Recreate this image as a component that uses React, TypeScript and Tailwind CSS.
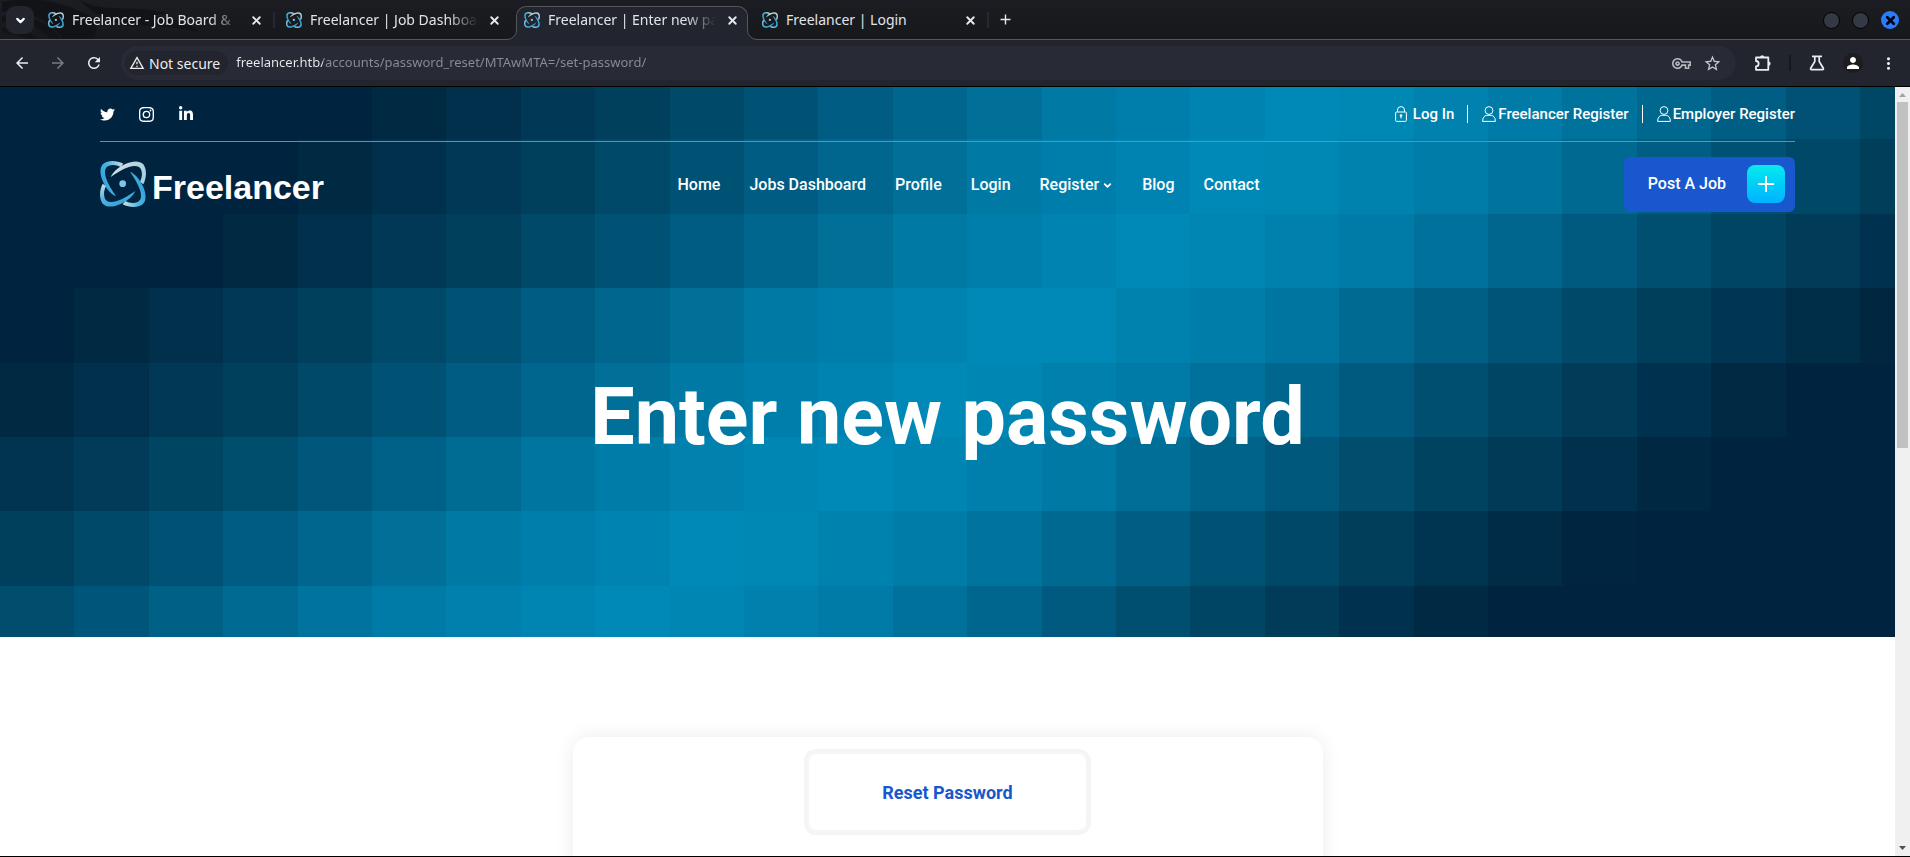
import React from "react";
import {
  MdArrowBack,
  MdArrowForward,
  MdRefresh,
  MdOutlineWarningAmber,
  MdOutlineVpnKey,
  MdStarBorder,
  MdPerson,
  MdMoreVert,
  MdAdd,
} from "react-icons/md";
import { FaTwitter, FaLinkedinIn } from "react-icons/fa";
import { BsInstagram } from "react-icons/bs";
import { ChevronDown, X } from "lucide-react";

const CELL = 74.4;
const COLUMNS = 26;

const PALETTE = [
  [0, 35, 63],
  [0, 41, 66],
  [0, 48, 76],
  [0, 56, 85],
  [0, 64, 92],
  [0, 73, 104],
  [0, 82, 116],
  [0, 92, 130],
  [0, 102, 141],
  [0, 112, 153],
  [0, 121, 165],
  [0, 126, 171],
  [0, 131, 176],
  [0, 137, 182],
];

// Per row: shift of the rising slope, and the column where the falling slope ends.
const ROWS = [
  { rise: -4, end: 29.2 },
  { rise: -3, end: 28.3 },
  { rise: -2, end: 27 },
  { rise: 0, end: 25.4 },
  { rise: 1, end: 24 },
  { rise: 2.5, end: 22.8 },
  { rise: 4, end: 21.3 },
  { rise: 5.4, end: 20 },
];

function shade(level: number): string {
  const top = PALETTE.length - 1;
  const l = Math.max(0, Math.min(top, level));
  const i = Math.floor(l);
  const j = Math.min(top, i + 1);
  const mix = PALETTE[i].map((c, k) => Math.round(c + (PALETTE[j][k] - c) * (l - i)));
  return `rgb(${mix.join(",")})`;
}

function Mosaic() {
  return (
    <svg
      aria-hidden="true"
      className="absolute inset-0 h-full w-full"
      viewBox="0 22 1895 550"
      preserveAspectRatio="none"
      shapeRendering="crispEdges"
    >
      {ROWS.map((row, r) =>
        Array.from({ length: COLUMNS }, (_, c) => (
          <rect
            key={`${r}-${c}`}
            x={c * CELL}
            y={r * CELL}
            width={CELL + 1}
            height={CELL + 1}
            fill={shade(Math.min(c + row.rise, (row.end - c) * 1.14))}
          />
        ))
      )}
    </svg>
  );
}

const LOBE =
  "M70 8C50-2 25-3 10 8C-3 20 0 42 9 62C18 82 31 98 48 106C36 88 24 70 18 51C13 35 13 21 25 15C38 10 50 12 62 18Z";

function AtomLogo({ id, className }: { id: string; className: string }) {
  return (
    <svg aria-hidden="true" viewBox="0 0 138 138" className={className}>
      <defs>
        <linearGradient id={`${id}-a`} x1="0" y1="0.6" x2="1" y2="0">
          <stop offset="0" stopColor="#2f9fd8" />
          <stop offset="0.45" stopColor="#4cb4e2" />
          <stop offset="1" stopColor="#d5e6e6" />
        </linearGradient>
        <linearGradient id={`${id}-b`} x1="0" y1="1" x2="0.6" y2="0">
          <stop offset="0" stopColor="#e9eeec" />
          <stop offset="0.5" stopColor="#b9d6de" />
          <stop offset="1" stopColor="#a5d3e4" />
        </linearGradient>
      </defs>
      <path d={LOBE} fill={`url(#${id}-a)`} />
      <path d={LOBE} fill={`url(#${id}-b)`} transform="rotate(90 69 69)" />
      <path d={LOBE} fill={`url(#${id}-a)`} transform="rotate(180 69 69)" />
      <path d={LOBE} fill={`url(#${id}-a)`} transform="rotate(270 69 69)" />
      <circle cx="68" cy="68" r="10" fill="#7cc6e6" />
    </svg>
  );
}

function DragonArt() {
  return (
    <svg aria-hidden="true" viewBox="0 0 220 39" className="absolute top-0 left-0 h-full w-56" fill="none">
      <path d="M0 2C30-4 60 0 92 18C96 26 94 32 92 39H60C50 20 25 10 0 12Z" fill="#121317" />
      <path d="M0 16C30 14 50 24 58 39H48C40 28 20 20 0 22Z" fill="#121317" />
      <path d="M0 28C15 28 28 32 36 39H24C16 34 8 33 0 33Z" fill="#121317" />
      <path d="M78 0C100 14 140 4 166 14C160 12 156 16 150 15C170 20 190 22 196 32C180 28 150 24 124 26C106 20 90 14 78 0Z" fill="#121317" />
    </svg>
  );
}

const TABS = [
  { title: "Freelancer - Job Board &", active: false, divider: true, fade: true },
  { title: "Freelancer | Job Dashboa", active: false, divider: false, fade: true },
  { title: "Freelancer | Enter new pa", active: true, divider: false, fade: true },
  { title: "Freelancer | Login", active: false, divider: true, fade: false },
];

function BrowserTab({ index }: { index: number }) {
  const tab = TABS[index];
  return (
    <div
      role="tab"
      aria-selected={tab.active}
      className={
        tab.active
          ? "relative z-10 -mb-px flex h-[34px] w-[232px] items-center rounded-t-[10px] border border-b-0 border-[#55565e] bg-[#22242e] pb-[13px] pl-[7px]"
          : "relative flex h-[33px] w-[238px] items-center pb-[11px] pl-2"
      }
    >
      {tab.active && (
        <>
          <svg aria-hidden="true" viewBox="0 0 10 10" className="absolute bottom-0 -left-[10px] size-[10px]">
            <path d="M10 0V10H0V9.5A9.5 9.5 0 0 0 9.500 0Z" fill="#22242e" />
            <path d="M0 9.500A9.500 9.500 0 0 0 9.500 0" fill="none" stroke="#55565e" />
          </svg>
          <svg aria-hidden="true" viewBox="0 0 10 10" className="absolute -right-[10px] bottom-0 size-[10px]">
            <path d="M0 0V10H10V9.500A9.500 9.500 0 0 1 .5 0Z" fill="#22242e" />
            <path d="M10 9.500A9.500 9.500 0 0 1 .5 0" fill="none" stroke="#55565e" />
          </svg>
        </>
      )}
      <AtomLogo id={`tab-${index}`} className="mt-[6px] size-4 shrink-0" />
      <span
        className={
          tab.fade
            ? "mt-[6px] ml-2 w-[168px] mask-r-from-82% mask-r-to-100% text-[14px] leading-5 whitespace-nowrap text-[#e2e3e6]"
            : "mt-[6px] ml-2 w-[168px] text-[14px] leading-5 whitespace-nowrap text-[#e2e3e6]"
        }
      >
        {tab.title}
      </span>
      <button type="button" aria-label={`Close ${tab.title}`} className="mt-[6px] ml-2 flex size-4 items-center justify-center text-[#e8e8ea]">
        <X size={13} strokeWidth={3.5} />
      </button>
      {tab.divider && <span className="absolute top-[6px] right-[3px] h-4 w-[2px] bg-[#262833]" />}
    </div>
  );
}

function PuzzleIcon() {
  return (
    <svg aria-hidden="true" viewBox="0 0 18 18" className="size-[18px]" fill="none" stroke="currentColor" strokeWidth="1.800" strokeLinejoin="round">
      <path d="M2 3.500H14.300V15.800H2V12.300A2.600 2.600 0 0 0 2 7Z" />
      <path d="M6 3A2.300 2.300 0 0 1 10.400 3ZM15 7.400A2.300 2.300 0 0 1 15 11.800Z" fill="currentColor" stroke="none" />
    </svg>
  );
}

function BrowserChrome() {
  return (
    <div className="shrink-0 font-['Noto_Sans',sans-serif]">
      <div className="relative flex h-10 items-end border-b border-[#55565e] bg-linear-to-b from-[#1c1d22] to-[#17181c]">
        <DragonArt />
        <button type="button" aria-label="Search tabs" className="relative mb-[5px] ml-[6px] flex size-7 items-center justify-center rounded-[9px] bg-[#22242e] text-white">
          <ChevronDown size={13} strokeWidth={4} />
        </button>
        <div role="tablist" className="relative ml-[6px] flex items-end">
          <BrowserTab index={0} />
          <BrowserTab index={1} />
          <BrowserTab index={2} />
          <div className="ml-[6px]">
            <BrowserTab index={3} />
          </div>
        </div>
        <button type="button" aria-label="New tab" className="relative mb-[11px] ml-[5px] text-[#e8e8ea]">
          <MdAdd size={17} />
        </button>
        <div className="mr-[11px] mb-[10px] ml-auto flex items-center gap-3">
          <button type="button" aria-label="Minimize" className="size-[17px] rounded-full border border-black bg-[#343946]" />
          <button type="button" aria-label="Maximize" className="size-[17px] rounded-full border border-black bg-[#343946]" />
          <button type="button" aria-label="Close window" className="flex size-[18px] items-center justify-center rounded-full bg-[#2a7bfd] text-black">
            <X size={13} strokeWidth={5} />
          </button>
        </div>
      </div>
      <div className="flex h-[47px] items-center border-b border-black bg-[#22242e] pr-3 pl-[13px] text-[#ececee]">
        <button type="button" aria-label="Back" className="w-9">
          <MdArrowBack size={18} />
        </button>
        <button type="button" aria-label="Forward" className="w-9 text-[#7a7b82]">
          <MdArrowForward size={18} />
        </button>
        <button type="button" aria-label="Reload" className="w-9">
          <MdRefresh size={18} />
        </button>
        <div className="flex h-[34px] flex-1 items-center rounded-full bg-[#282a35] pr-[14px] pl-1">
          <button type="button" className="flex h-6 items-center gap-1 rounded-full bg-[#22242e] pr-2 pl-1 text-[14px]">
            <MdOutlineWarningAmber size={16} />
            Not secure
          </button>
          <input
            aria-label="Address"
            defaultValue="freelancer.htb/accounts/password_reset/MTAwMTA=/set-password/"
            className="ml-2 min-w-0 flex-1 bg-[linear-gradient(90deg,#ececee_87px,#8c8d94_87px)] bg-clip-text text-[13px] text-transparent outline-none"
          />
          <button type="button" aria-label="Passwords" className="text-[#b9babd]">
            <MdOutlineVpnKey size={19} />
          </button>
          <button type="button" aria-label="Bookmark" className="ml-3 text-[#c6c7ca]">
            <MdStarBorder size={19} />
          </button>
        </div>
        <button type="button" aria-label="Extensions" className="ml-[18px]">
          <PuzzleIcon />
        </button>
        <span className="ml-[17px] h-4 w-[2px] bg-[#17181c]" />
        <button type="button" aria-label="Experiments" className="ml-[18px]">
          <svg viewBox="0 0 16 16" className="size-4" fill="none" stroke="currentColor" strokeWidth="1.700">
            <path d="M3 1.300H13M5.800 1.500V6.500L1.700 13.200Q1.200 14.700 2.600 14.700H13.400Q14.800 14.700 14.300 13.200L10.200 6.500V1.500" />
          </svg>
        </button>
        <button type="button" aria-label="Profile" className="ml-[18px] flex size-5 items-center justify-center rounded-full bg-[#1d1d1f] text-white">
          <MdPerson size={18} />
        </button>
        <button type="button" aria-label="Menu" className="ml-4">
          <MdMoreVert size={19} />
        </button>
      </div>
    </div>
  );
}

function PersonIcon() {
  return (
    <svg aria-hidden="true" viewBox="0 0 14 16" className="h-4 w-[14px]" fill="none" stroke="currentColor" strokeWidth="1">
      <circle cx="7" cy="4.500" r="3.900" />
      <path d="M.6 15.400C.6 11.500 2.500 9.500 4.800 9.300H9.200C11.500 9.500 13.400 11.500 13.400 15.400Z" />
    </svg>
  );
}

function LockIcon() {
  return (
    <svg aria-hidden="true" viewBox="0 0 12 16" className="h-4 w-3" fill="none" stroke="currentColor" strokeWidth="1">
      <rect x=".6" y="6" width="10.800" height="9.400" rx="1" />
      <path d="M2.500 6V4A3.500 3.400 0 0 1 9.500 4V6" />
      <path d="M6 9.500V12.500" />
      <circle cx="6" cy="9.500" r="1.200" fill="currentColor" stroke="none" />
    </svg>
  );
}

function TopBar() {
  return (
    <div className="flex h-[55px] items-center justify-between border-b border-[#85888a]">
      <div className="flex items-center gap-6">
        <a href="#twitter" aria-label="Twitter">
          <FaTwitter size={15} />
        </a>
        <a href="#instagram" aria-label="Instagram">
          <BsInstagram size={15} />
        </a>
        <a href="#linkedin" aria-label="LinkedIn">
          <FaLinkedinIn size={16} />
        </a>
      </div>
      <div className="flex items-center text-[15px] font-medium">
        <a href="#login" className="flex items-center gap-[6px] pr-[13px]">
          <LockIcon />
          Log In
        </a>
        <a href="#freelancer-register" className="flex h-[18px] items-center gap-[2px] border-l border-white pr-[13px] pl-[14px]">
          <PersonIcon />
          Freelancer Register
        </a>
        <a href="#employer-register" className="flex h-[18px] items-center gap-[2px] border-l border-white pl-[14px]">
          <PersonIcon />
          Employer Register
        </a>
      </div>
    </div>
  );
}

function MainNav() {
  return (
    <div className="grid h-[84px] grid-cols-[1fr_auto_1fr] items-center">
      <a href="#top" className="flex items-center gap-[6px]">
        <AtomLogo id="brand" className="size-[46px]" />
        <span className="mt-[6px] font-['Liberation_Sans',sans-serif] text-[34px] leading-10 font-bold">Freelancer</span>
      </a>
      <nav className="mr-[-42px] flex items-center gap-[29px] pt-[2px] text-[16px] font-medium">
        <a href="#home">Home</a>
        <a href="#jobs">Jobs Dashboard</a>
        <a href="#profile">Profile</a>
        <a href="#login">Login</a>
        <a href="#register" className="flex items-center gap-[3px]">
          Register
          <ChevronDown size={11} strokeWidth={4} />
        </a>
        <a href="#blog">Blog</a>
        <a href="#contact">Contact</a>
      </nav>
      <a href="#post" className="flex h-[55px] items-center justify-self-end rounded-md bg-[#1857cd] pr-[10px] pl-6 text-[16px] font-medium">
        Post A Job
        <span className="ml-[21px] flex size-[38px] items-center justify-center rounded-lg bg-linear-to-b from-[#0deaee] to-[#00b2ff]">
          <svg aria-hidden="true" viewBox="0 0 16 16" className="size-4" stroke="currentColor" strokeWidth="2">
            <path d="M8 0V16M0 8H16" />
          </svg>
        </span>
      </a>
    </div>
  );
}

function ScrollBar() {
  return (
    <div aria-hidden="true" className="flex w-[15px] shrink-0 flex-col items-center bg-[#f0f0f0]">
      <svg viewBox="0 0 15 15" className="size-[15px] shrink-0">
        <path d="M4 10L7.500 6L11 10Z" fill="#a3a3a3" />
      </svg>
      <div className="h-[45%] w-[11px] bg-[#c1c1c1]" />
      <svg viewBox="0 0 15 15" className="mt-auto size-[15px] shrink-0">
        <path d="M4 5L7.500 9L11 5Z" fill="#505050" />
      </svg>
    </div>
  );
}

export default function App() {
  return (
    <div className="flex h-screen flex-col overflow-hidden border-b border-black bg-white">
      <BrowserChrome />
      <div className="flex min-h-0 flex-1">
        <div className="min-w-0 flex-1 overflow-hidden font-['Roboto',sans-serif]">
          <header className="relative bg-[#00233f] text-white">
            <Mosaic />
            <div className="relative px-[100px]">
              <TopBar />
              <MainNav />
              <h1 className="pt-[147px] pb-[176px] text-center text-[79px] leading-[88px] font-bold">Enter new password</h1>
            </div>
          </header>
          <main className="px-6 pt-[100px]">
            <section className="mx-auto h-96 max-w-[750px] rounded-2xl bg-white pt-3 shadow-[0_0_20px_rgba(0,0,0,0.08)]">
              <h2 className="mx-auto flex h-[86px] w-[287px] items-center justify-center rounded-xl border-[5px] border-[#f5f5f5] text-[18px] font-bold text-[#1857cd]">
                Reset Password
              </h2>
            </section>
          </main>
        </div>
        <ScrollBar />
      </div>
    </div>
  );
}
